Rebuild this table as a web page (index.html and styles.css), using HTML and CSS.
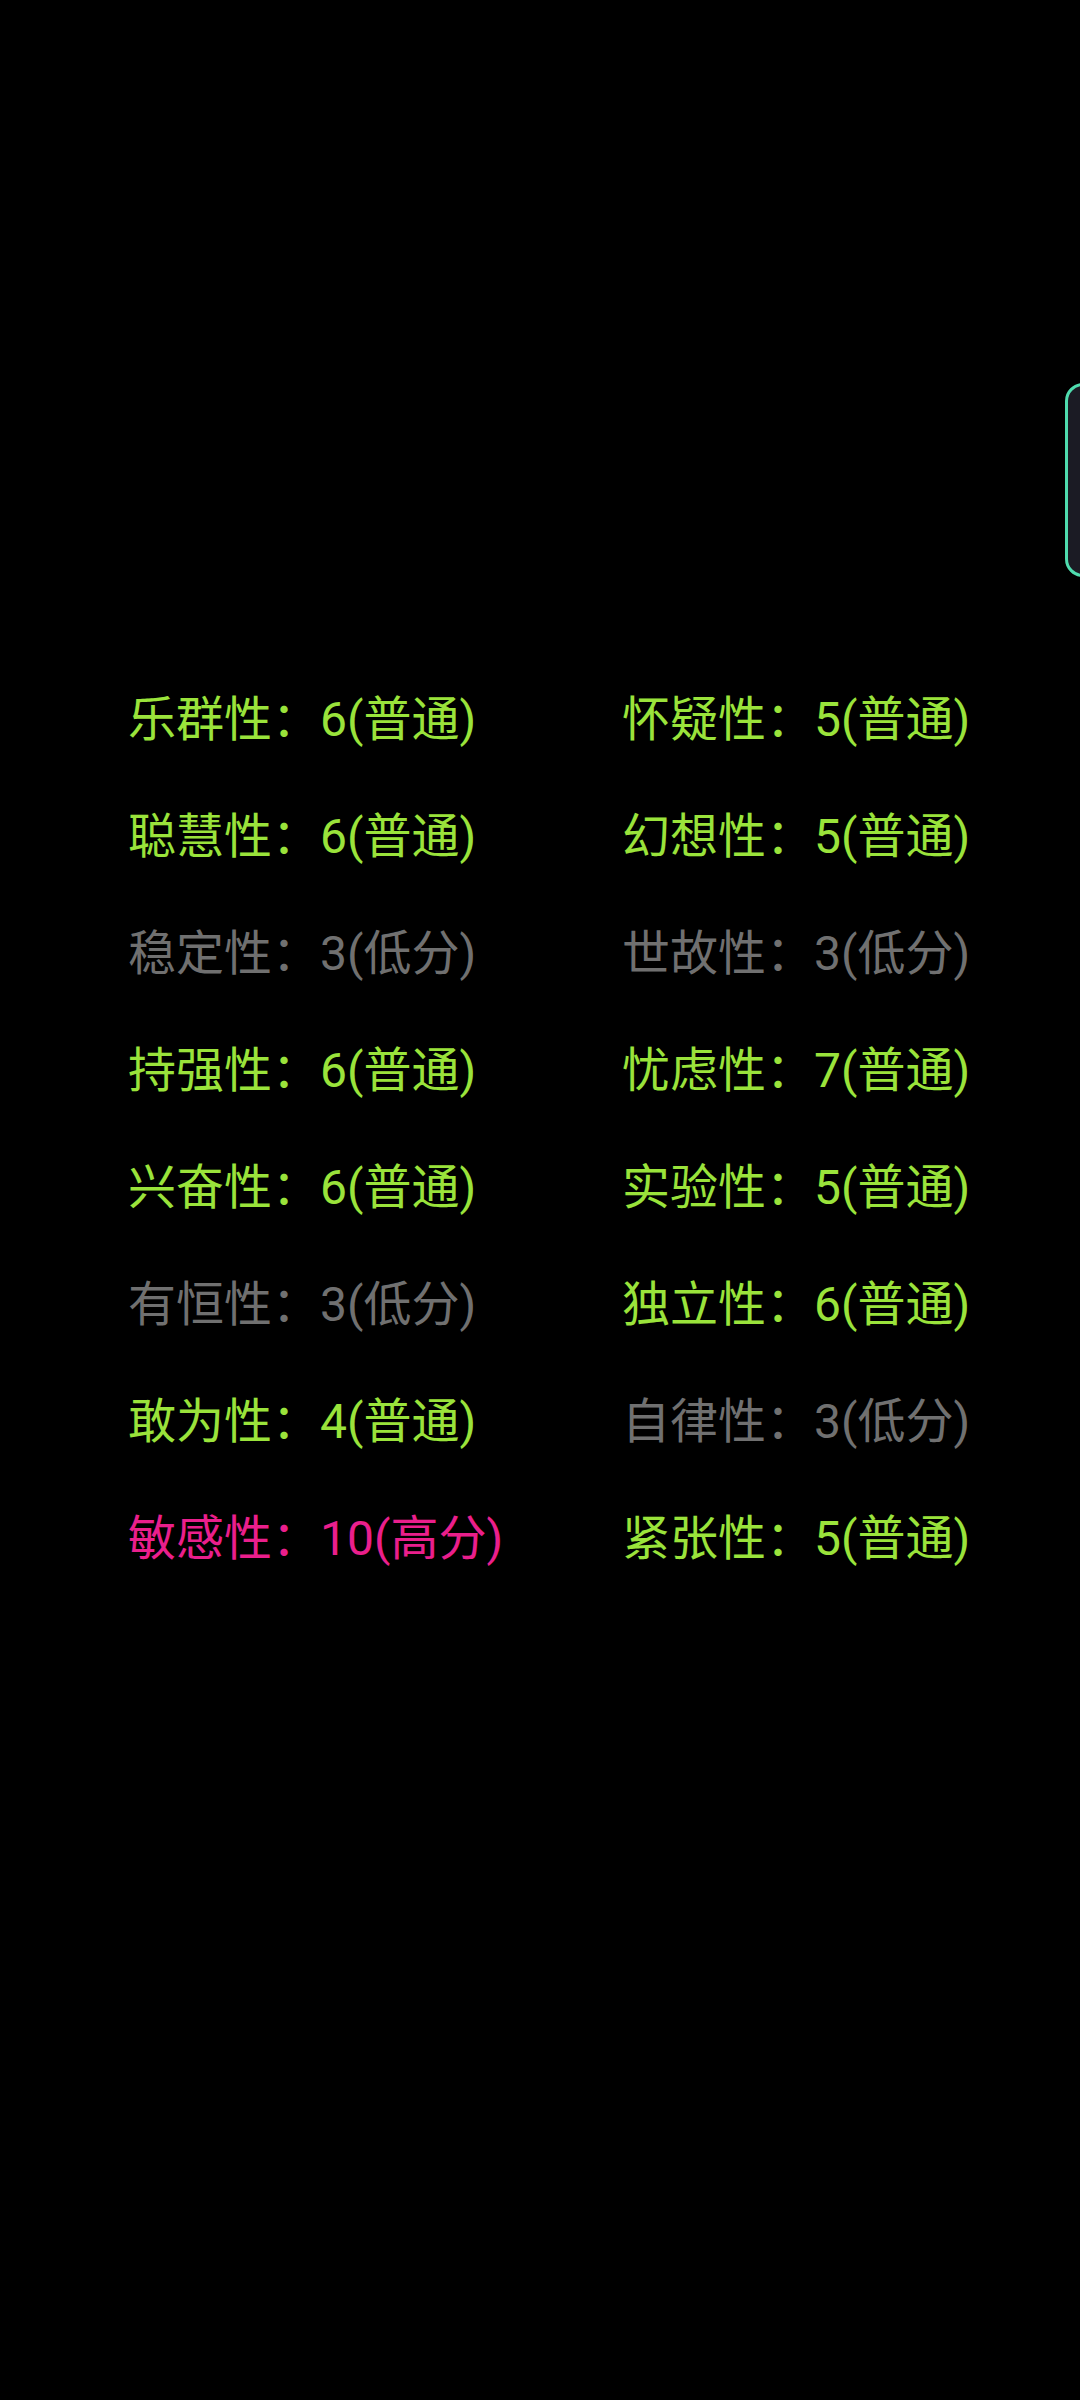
FILE: index.html
```html
<!DOCTYPE html>
<html lang="zh-CN">
<head>
<meta charset="utf-8">
<link rel="stylesheet" href="styles.css">
</head>
<body>
<div class="side-tab"></div>
<main class="grid">
  <div class="item ok">乐群性：6(普通)</div>
  <div class="item ok">怀疑性：5(普通)</div>
  <div class="item ok">聪慧性：6(普通)</div>
  <div class="item ok">幻想性：5(普通)</div>
  <div class="item low">稳定性：3(低分)</div>
  <div class="item low">世故性：3(低分)</div>
  <div class="item ok">持强性：6(普通)</div>
  <div class="item ok">忧虑性：7(普通)</div>
  <div class="item ok">兴奋性：6(普通)</div>
  <div class="item ok">实验性：5(普通)</div>
  <div class="item low">有恒性：3(低分)</div>
  <div class="item ok">独立性：6(普通)</div>
  <div class="item ok">敢为性：4(普通)</div>
  <div class="item low">自律性：3(低分)</div>
  <div class="item high">敏感性：10(高分)</div>
  <div class="item ok">紧张性：5(普通)</div>
</main>
</body>
</html>
```
FILE: styles.css
```css
html, body {
  margin: 0;
  padding: 0;
  background: #000;
  width: 1080px;
  height: 2400px;
  overflow: hidden;
}
body {
  position: relative;
  font-family: Roboto, "Noto Sans CJK SC", sans-serif;
}
.side-tab {
  position: absolute;
  left: 1065px;
  top: 383px;
  width: 40px;
  height: 188px;
  border: 3px solid #4fdcae;
  border-radius: 18px;
  background: #1b1b24;
}
.grid {
  display: grid;
  grid-template-columns: 494px 458px;
  padding: 661px 0 0 128px;
}
.item {
  font-size: 48px;
  line-height: 117px;
  height: 117px;
  white-space: nowrap;
}
.ok { color: #9ae33b; }
.low { color: #707070; }
.high { color: #ea1f8c; }
```
